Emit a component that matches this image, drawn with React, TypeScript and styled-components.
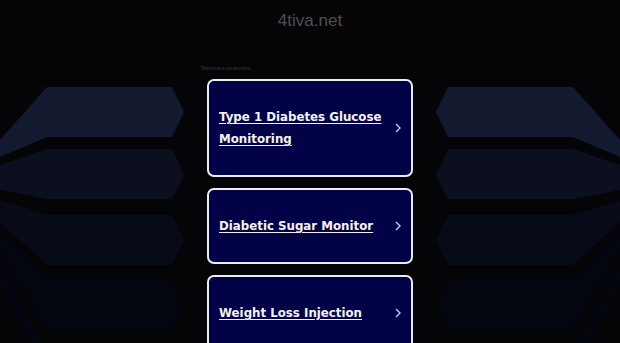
import React from "react";
import styled, { createGlobalStyle } from "styled-components";

const GlobalStyle = createGlobalStyle`
    html, body {
        margin: 0;
        padding: 0;
        background: #050508;
        overflow: hidden;
    }
    body {
        font-family: "DejaVu Sans", Verdana, sans-serif;
    }
`;

const searches = ["Type 1 Diabetes Glucose Monitoring", "Diabetic Sugar Monitor", "Weight Loss Injection"];

// ribbon shapes of the backdrop, left side in page coordinates
const ribbons = [
    { fill: "#131a30", points: "47,87 172,87 184,112 172,137 47,137 0,157 0,140" },
    { fill: "#0b0f1f", points: "47,149 172,149 184,175 172,199 47,199 0,190 0,165" },
    { fill: "#070a17", points: "47,215 172,215 184,240 172,265 47,265 0,222 0,200" },
    { fill: "#04060f", points: "47,280 172,280 184,305 172,330 47,330 0,252 0,232" },
    { fill: "#04060f", points: "0,262 0,285 30,343 42,343" },
];

const Page = styled.div`
    width: 620px;
    height: 343px;
    display: flex;
    flex-direction: column;
    overflow: hidden;
`;

const Header = styled.header`
    height: 60px;
    display: flex;
    justify-content: center;
    padding-top: 10px;
    box-sizing: border-box;
`;

const Domain = styled.h1`
    margin: 0;
    font-family: "Liberation Sans", Arial, sans-serif;
    font-weight: normal;
    font-size: 17px;
    line-height: 22px;
    color: #4f4f52;
`;

const Main = styled.main`
    flex: 1;
    display: grid;
    grid-template-columns: 1fr 218px 1fr;
    min-height: 0;
`;

const Side = styled.div`
    overflow: hidden;
`;

const Column = styled.section`
    display: flex;
    flex-direction: column;
`;

const Label = styled.div`
    font-family: "Liberation Sans", Arial, sans-serif;
    font-size: 6px;
    line-height: 8px;
    color: #34343a;
    margin-top: 4px;
    margin-bottom: 7px;
`;

const List = styled.div`
    display: flex;
    flex-direction: column;
    gap: 11px;
    padding: 0 6px;
`;

const Card = styled.a`
    display: flex;
    align-items: center;
    gap: 10px;
    padding: 25px 10px;
    background: #020247;
    border: 2px solid #ececf4;
    border-radius: 7px;
    text-decoration: none;
`;

const CardText = styled.span`
    flex: 1;
    color: #f2f2f8;
    font-size: 11.8px;
    font-weight: bold;
    line-height: 22px;
    text-decoration: underline;
    text-underline-offset: 2px;
`;

const Backdrop: React.FC<{ mirror?: boolean }> = ({ mirror }) => (
    <svg width="201" height="283" viewBox="0 60 201 283">
        <g transform={mirror ? "translate(201 0) scale(-1 1)" : undefined}>
            {ribbons.map((r, i) => (
                <polygon key={i} points={r.points} fill={r.fill} />
            ))}
        </g>
    </svg>
);

const Chevron = () => (
    <svg width="6" height="10" viewBox="0 0 6 10">
        <polyline points="1,1 5,5 1,9" fill="none" stroke="#c4c8f0" strokeWidth="1.4" />
    </svg>
);

export default function App() {
    return (
        <Page>
            <GlobalStyle />
            <Header>
                <Domain>4tiva.net</Domain>
            </Header>
            <Main>
                <Side>
                    <Backdrop />
                </Side>
                <Column>
                    <Label>Relevant searches</Label>
                    <List>
                        {searches.map(s => (
                            <Card key={s} href="#">
                                <CardText>{s}</CardText>
                                <Chevron />
                            </Card>
                        ))}
                    </List>
                </Column>
                <Side>
                    <Backdrop mirror />
                </Side>
            </Main>
        </Page>
    );
}
